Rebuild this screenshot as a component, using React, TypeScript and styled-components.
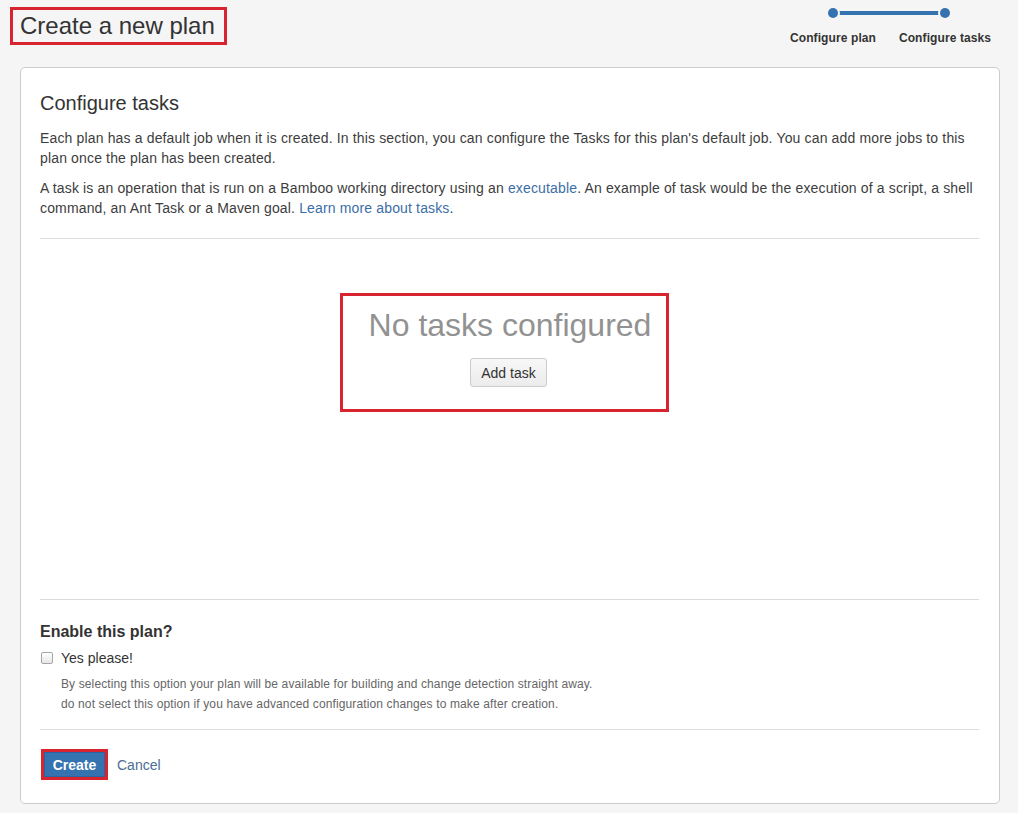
import styled, { createGlobalStyle } from "styled-components";

const GlobalStyle = createGlobalStyle`
  body {
    margin: 0;
    background: #f5f5f5;
    font-family: "Liberation Sans", Arial, sans-serif;
    color: #333;
  }
  * { box-sizing: border-box; }
`;

const Page = styled.div`
  padding: 0 18px 0 20px;
`;

// 상단 제목 + 진행 표시
const Header = styled.header`
  display: flex;
  justify-content: space-between;
  align-items: flex-start;
  height: 67px;
`;

const Highlight = styled.div<{ $w?: number }>`
  border: ${(p) => p.$w ?? 3}px solid #d7242e;
`;

const TitleBox = styled(Highlight)`
  margin: 7px 0 0 -10px;
  padding: 0 9px 0 7px;
`;

const Title = styled.h1`
  margin: 0;
  font-size: 24px;
  font-weight: normal;
  line-height: 32px;
  color: #333;
`;

const Tracker = styled.ol`
  position: relative;
  display: flex;
  margin: 0 -1px 0 0;
  padding: 8px 0 0;
  list-style: none;
  // 두 점을 잇는 선
  &::before {
    content: "";
    position: absolute;
    top: 11px;
    left: 56px;
    right: 56px;
    height: 4px;
    background: #3572b0;
  }
`;

const Step = styled.li`
  position: relative;
  width: 112px;
  display: flex;
  flex-direction: column;
  align-items: center;
`;

const Dot = styled.span`
  width: 10px;
  height: 10px;
  border-radius: 50%;
  background: #3572b0;
  box-shadow: 0 0 0 2px #f5f5f5;
`;

const StepLabel = styled.span`
  margin-top: 13px;
  font-size: 12px;
  font-weight: bold;
  line-height: 14px;
  letter-spacing: 0.1px;
  color: #333;
`;

// 메인 카드
const Card = styled.section`
  background: #fff;
  border: 1px solid #cccccc;
  border-radius: 5px;
  padding: 20px 20px 23px 19px;
`;

const Heading = styled.h2`
  margin: 0;
  font-size: 20px;
  font-weight: normal;
  line-height: 30px;
  color: #333;
`;

const Para = styled.p`
  margin: 10px 0 0;
  font-size: 14px;
  line-height: 20px;
  letter-spacing: 0.15px;
  color: #3d3d3d;
`;

const Link = styled.a`
  color: #3b6ea6;
  text-decoration: none;
`;

const Rule = styled.hr`
  margin: 0;
  border: 0;
  border-top: 1px solid #dcdcdc;
`;

const TopRule = styled(Rule)`
  margin-top: 20px;
`;

const EmptyArea = styled.div`
  height: 360px;
  padding-top: 54px;
  display: flex;
  justify-content: center;
  align-items: flex-start;
`;

const EmptyBox = styled(Highlight)`
  margin-right: 10px;
  padding: 10px 15px 22px 26px;
  display: flex;
  flex-direction: column;
  align-items: center;
`;

const EmptyTitle = styled.h3`
  margin: 0;
  font-size: 32px;
  font-weight: normal;
  line-height: 38px;
  color: #929292;
`;

const Button = styled.button`
  margin: 14px 3px 0 0;
  height: 29px;
  padding: 0 10px;
  font-family: inherit;
  font-size: 14px;
  color: #333;
  background: linear-gradient(#f7f7f7, #ececec);
  border: 1px solid #cccccc;
  border-radius: 3px;
  cursor: pointer;
`;

const Enable = styled.div`
  padding: 22px 0 15px;
`;

const EnableTitle = styled.h4`
  margin: 0;
  font-size: 16px;
  font-weight: bold;
  line-height: 20px;
  color: #333;
`;

const CheckRow = styled.label`
  display: flex;
  align-items: center;
  gap: 8px;
  margin-top: 6px;
  font-size: 14px;
  line-height: 20px;
  color: #333;
`;

const Check = styled.input`
  appearance: none;
  margin: 0 0 0 1px;
  width: 12px;
  height: 12px;
  border: 1px solid #a6a6a6;
  border-radius: 2px;
  background: linear-gradient(#fff, #e6e6e6);
`;

const Description = styled.div`
  padding-left: 21px;
  margin-top: 6px;
  font-size: 12px;
  line-height: 20px;
  letter-spacing: 0.12px;
  color: #666;
`;

const Actions = styled.div`
  display: flex;
  align-items: center;
  gap: 9px;
  padding-top: 19px;
`;

const SubmitBox = styled(Highlight)`
  margin-left: 1px;
`;

const Submit = styled.button`
  display: block;
  width: 61px;
  height: 25px;
  font-family: inherit;
  font-size: 14px;
  font-weight: bold;
  color: #fff;
  background: #3572b0;
  border: 1px solid #2d63a0;
  cursor: pointer;
`;

const Cancel = styled(Link)`
  font-size: 14px;
  color: #4b6e96;
`;

export default function App() {
  return (
    <>
      <GlobalStyle />
      <Page>
        <Header>
          <TitleBox>
            <Title>Create a new plan</Title>
          </TitleBox>
          <Tracker>
            <Step>
              <Dot />
              <StepLabel>Configure plan</StepLabel>
            </Step>
            <Step>
              <Dot />
              <StepLabel>Configure tasks</StepLabel>
            </Step>
          </Tracker>
        </Header>

        <Card>
          <Heading>Configure tasks</Heading>
          <Para>
            Each plan has a default job when it is created. In this section, you can configure the Tasks for this
            plan's default job. You can add more jobs to this plan once the plan has been created.
          </Para>
          <Para>
            A task is an operation that is run on a Bamboo working directory using an{" "}
            <Link href="#">executable</Link>. An example of task would be the execution of a script, a shell command,
            an Ant Task or a Maven goal. <Link href="#">Learn more about tasks</Link>.
          </Para>
          <TopRule />

          <EmptyArea>
            <EmptyBox>
              <EmptyTitle>No tasks configured</EmptyTitle>
              <Button type="button">Add task</Button>
            </EmptyBox>
          </EmptyArea>

          <Rule />
          <Enable>
            <EnableTitle>Enable this plan?</EnableTitle>
            <CheckRow>
              <Check type="checkbox" />
              Yes please!
            </CheckRow>
            <Description>
              By selecting this option your plan will be available for building and change detection straight away.
              <br />
              do not select this option if you have advanced configuration changes to make after creation.
            </Description>
          </Enable>
          <Rule />

          <Actions>
            <SubmitBox>
              <Submit type="submit">Create</Submit>
            </SubmitBox>
            <Cancel href="#">Cancel</Cancel>
          </Actions>
        </Card>
      </Page>
    </>
  );
}
